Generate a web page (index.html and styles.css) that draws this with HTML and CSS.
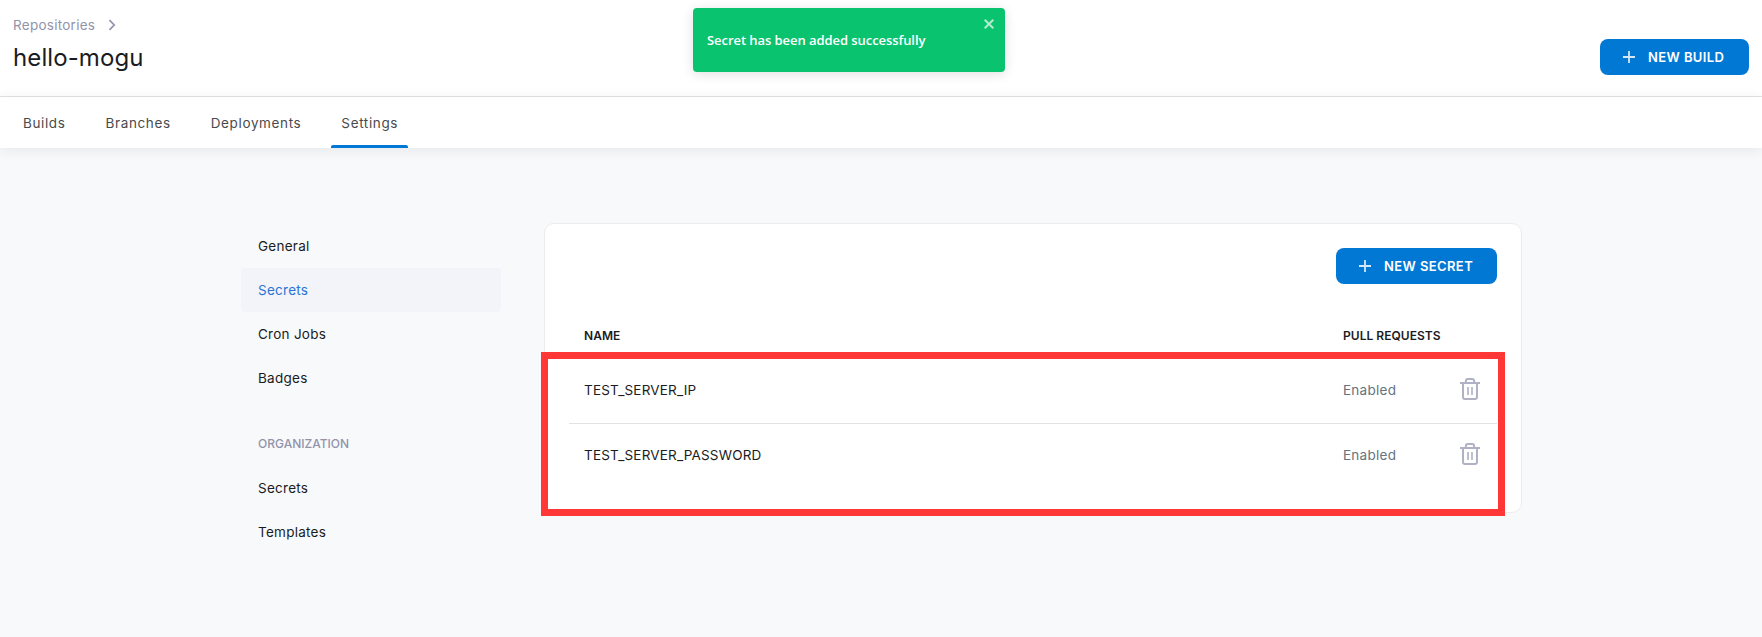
FILE: index.html
```html
<!DOCTYPE html>
<html lang="en">
<head>
<meta charset="utf-8">
<title>hello-mogu</title>
<link rel="stylesheet" href="styles.css">
</head>
<body>
<header class="header">
  <div>
    <nav class="crumbs"><span class="crumb">Repositories</span><svg class="chevron" width="8" height="12" viewBox="0 0 8 12"><path d="M1.5 1.2 6.2 6 1.5 10.8"/></svg></nav>
    <h1 class="title">hello-mogu</h1>
  </div>
  <button class="button build"><svg class="plus" width="12" height="12" viewBox="0 0 12 12"><path d="M6 0v12M0 6h12"/></svg><span>NEW BUILD</span></button>
</header>
<nav class="tabs">
  <a class="tab">Builds</a><a class="tab">Branches</a><a class="tab">Deployments</a><a class="tab active">Settings</a>
</nav>
<main class="main">
  <aside class="side">
    <a class="item">General</a>
    <a class="item selected">Secrets</a>
    <a class="item">Cron Jobs</a>
    <a class="item">Badges</a>
    <div class="group">ORGANIZATION</div>
    <a class="item">Secrets</a>
    <a class="item">Templates</a>
  </aside>
  <section class="card">
    <div class="actions"><button class="button secret"><svg class="plus" width="12" height="12" viewBox="0 0 12 12"><path d="M6 0v12M0 6h12"/></svg><span>NEW SECRET</span></button></div>
    <div class="row head"><span>NAME</span><span class="pulls">PULL REQUESTS</span></div>
    <div class="row">
      <span class="name">TEST_SERVER_IP</span><span class="enabled">Enabled</span>
      <svg class="trash" width="20" height="22" viewBox="0 0 20 22"><path d="M0 5h20M5.9 5V3q0-2 2-2h4.2q2 0 2 2v2M3 5v14q0 2 2 2h10q2 0 2-2V5"/><path class="slots" d="M8 9v8M12 9v8"/></svg>
    </div>
    <div class="row">
      <span class="name">TEST_SERVER_PASSWORD</span><span class="enabled">Enabled</span>
      <svg class="trash" width="20" height="22" viewBox="0 0 20 22"><path d="M0 5h20M5.9 5V3q0-2 2-2h4.2q2 0 2 2v2M3 5v14q0 2 2 2h10q2 0 2-2V5"/><path class="slots" d="M8 9v8M12 9v8"/></svg>
    </div>
    <div class="highlight"></div>
  </section>
</main>
<div class="toast"><span>Secret has been added successfully</span><svg class="close" width="10" height="10" viewBox="0 0 10 10"><path d="M.7.7l8.6 8.6M9.3.7.7 9.3"/></svg></div>
</body>
</html>
```
FILE: styles.css
```css
* { box-sizing: border-box; }
body { margin: 0; height: 637px; overflow: hidden; background: #f8f9fb; color: #1a1c22; font-family: Inter, "Liberation Sans", sans-serif; font-size: 13.5px; letter-spacing: 0.26px; }
svg { display: block; fill: none; stroke: currentColor; flex: none; }
.header { height: 97px; padding: 0 13px; display: flex; justify-content: space-between; background: #fff; border-bottom: 1px solid #e3e3e5; }
.crumbs { display: flex; align-items: center; gap: 13px; height: 20px; margin-top: 15px; color: #9293ab; }
.crumb { letter-spacing: 0.26px; }
.chevron { stroke-width: 1.7; }
.title { margin: 7px 0 0; font-size: 24px; line-height: 32px; font-weight: 400; letter-spacing: 0.1px; }
.button { display: flex; align-items: center; height: 36px; padding: 0 0 0 23px; gap: 13px; border: 0; border-radius: 8px; background: #0278d5; color: #fff; font-family: inherit; font-size: 13px; font-weight: 600; letter-spacing: 0.4px; white-space: nowrap; }
.plus { stroke: #d5e8f8; stroke-width: 1.8; }
.build { width: 149px; margin-top: 39px; }
.secret { width: 161px; }
.tabs { display: flex; gap: 20px; height: 51px; padding-left: 13px; background: #fff; box-shadow: 0 2px 12px rgba(40, 45, 60, 0.09); }
.tab { padding: 0 10px; line-height: 53px; height: 51px; color: #4a4a4d; letter-spacing: 0.63px; }
.active { position: relative; }
.active::after { content: ""; position: absolute; left: 0; right: 0; bottom: 0; height: 3px; border-radius: 2px 2px 0 0; background: #0278d5; }
.main { display: flex; gap: 43px; padding: 75px 0 0 241px; align-items: flex-start; }
.side { width: 260px; padding-top: 1px; }
.item, .group { display: block; height: 44px; line-height: 44px; padding-left: 17px; }
.selected { background: #f3f3fa; color: #2a74d4; border-radius: 4px; }
.group { margin-top: 22px; color: #9293ab; font-size: 12px; font-weight: 500; letter-spacing: 0; }
.card { position: relative; width: 978px; height: 290px; padding: 24px 24px 0; background: #fff; border: 1px solid #ebecef; border-radius: 10px; }
.actions { display: flex; justify-content: flex-end; }
.row { display: grid; grid-template-columns: 759px 117px 20px; align-items: center; height: 65px; padding: 0 0 1px 15px; }
.row + .row + .row { border-top: 1px solid #e1e2e5; padding-bottom: 2px; }
.head { height: 74px; padding-top: 30px; font-size: 12px; font-weight: 600; letter-spacing: 0.04px; }
.pulls { white-space: nowrap; }
.name { letter-spacing: 0.18px; }
.enabled { color: #647380; }
.trash { color: #b0b1c4; stroke-width: 2; margin-bottom: 2px; }
.slots { stroke-width: 1.6; }
.highlight { position: absolute; left: -4px; top: 128px; width: 964px; height: 164px; border: 7px solid #ff3737; }
.toast { position: absolute; left: 693px; top: 8px; width: 312px; height: 64px; padding: 0 14px; display: flex; align-items: center; border-radius: 4px; background: #0ac36f; color: #fff; font: 600 13px "Open Sans", sans-serif; letter-spacing: -0.06px; box-shadow: 0 2px 12px rgba(0, 0, 0, 0.13); }
.close { position: absolute; right: 11px; top: 11px; color: #b4ebd1; stroke-width: 2; }
```
